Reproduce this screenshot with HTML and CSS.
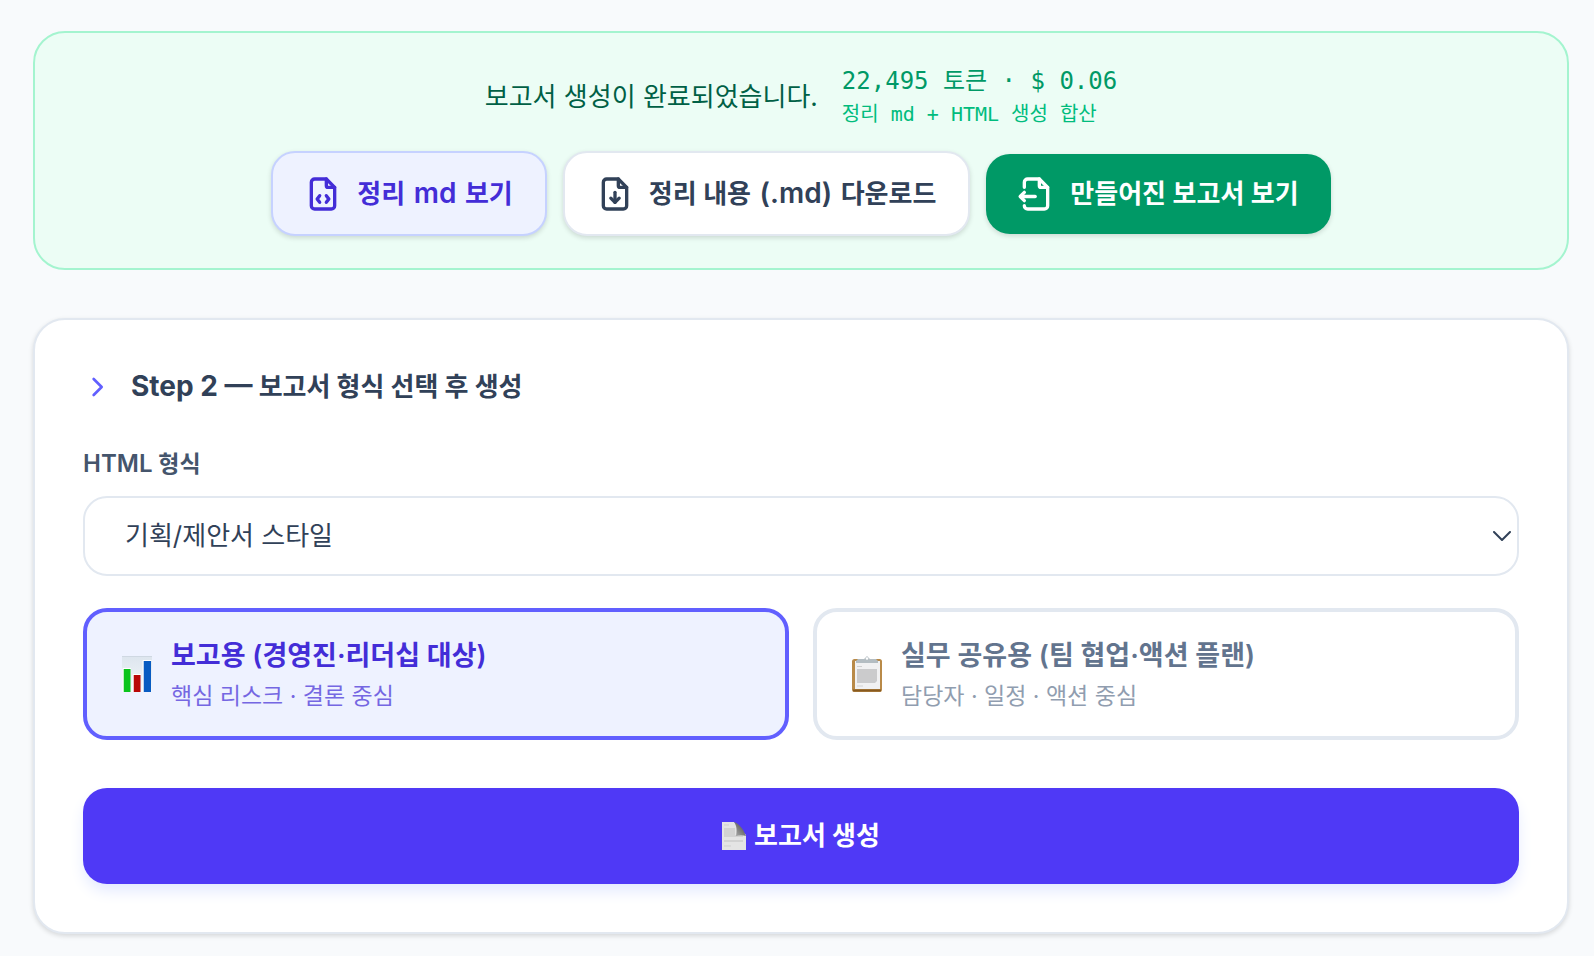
FILE: index.html
```html
<!DOCTYPE html>
<html lang="ko">
<head>
<meta charset="utf-8">
<meta name="viewport" content="width=device-width, initial-scale=1">
<title>보고서 생성</title>
<link rel="stylesheet" href="styles.css">
</head>
<body>
<main class="page">
  <section class="done">
    <div class="done-head">
      <p class="done-message">보고서 생성이 완료되었습니다.</p>
      <div class="usage">
        <span class="usage-total">22,495 토큰 · $ 0.06</span>
        <span class="usage-note">정리 md + HTML 생성 합산</span>
      </div>
    </div>
    <div class="actions">
      <button type="button" class="btn btn-view">
        <svg class="icon" viewBox="0 0 24 24" aria-hidden="true"><path d="M14 3v4a1 1 0 0 0 1 1h4"/><path d="M17 21H7a2 2 0 0 1-2-2V5a2 2 0 0 1 2-2h7l5 5v11a2 2 0 0 1-2 2z"/><path d="M10 13l-1.500 2 1.500 2"/><path d="M14 13l1.500 2-1.500 2"/></svg>
        <span>정리 <span class="latin">md</span> 보기</span>
      </button>
      <button type="button" class="btn btn-download">
        <svg class="icon" viewBox="0 0 24 24" aria-hidden="true"><path d="M14 3v4a1 1 0 0 0 1 1h4"/><path d="M17 21H7a2 2 0 0 1-2-2V5a2 2 0 0 1 2-2h7l5 5v11a2 2 0 0 1-2 2z"/><path d="M12 11v6"/><path d="M9.500 14.500L12 17l2.500-2.500"/></svg>
        <span>정리 내용 <span class="latin">(.md)</span> 다운로드</span>
      </button>
      <button type="button" class="btn btn-report">
        <svg class="icon" viewBox="0 0 24 24" aria-hidden="true"><path d="M14 3v4a1 1 0 0 0 1 1h4"/><path d="M5 8V5a2 2 0 0 1 2-2h7l5 5v11a2 2 0 0 1-2 2H7a2 2 0 0 1-2-2"/><path d="M11.500 13.500H3"/><path d="M5 11l-2.500 2.500L5 16"/></svg>
        <span>만들어진 보고서 보기</span>
      </button>
    </div>
  </section>

  <section class="card">
    <button type="button" class="step">
      <svg class="step-icon" viewBox="0 0 24 24" aria-hidden="true"><path d="M8 6l6 6-6 6"/></svg>
      <span><span class="latin">Step 2 —</span> 보고서 형식 선택 후 생성</span>
    </button>

    <div class="field">
      <label class="label" for="format"><span class="label-latin">HTML</span> 형식</label>
      <div class="select-wrap">
        <select id="format" class="select">
          <option>기획/제안서 스타일</option>
        </select>
        <svg class="select-arrow" viewBox="0 0 18 10" aria-hidden="true"><path d="M1 1l8 8 8-8"/></svg>
      </div>
    </div>

    <div class="choices">
      <button type="button" class="choice choice-active" aria-pressed="true">
        <svg class="emoji" viewBox="-2 0 36 38" aria-hidden="true">
          <defs><linearGradient id="sheet" x1="0" y1="0" x2="0" y2="1"><stop offset="0" stop-color="#dde5ee"/><stop offset="1" stop-color="#f4f7fb"/></linearGradient></defs>
          <rect x="1" y="1" width="30" height="36" fill="url(#sheet)"/>
          <path d="M1 1.500h30" stroke="#cfd8e2"/>
          <path d="M2.500 14h7v23h-7z" fill="#0bc41c"/><path d="M12.500 20h7v17h-7z" fill="#b90707"/><path d="M22.500 6h7.500v31h-7.500z" fill="#085bc2"/>
          <path d="M2 37V13.500h8M12 37V19.500h8M22 37V5.500h8.500" fill="none" stroke="#fff"/>
        </svg>
        <span class="choice-text">
          <span class="choice-title">보고용 (경영진·리더십 대상)</span>
          <span class="choice-note">핵심 리스크 · 결론 중심</span>
        </span>
      </button>
      <button type="button" class="choice" aria-pressed="false">
        <svg class="emoji" viewBox="-2 0 36 38" aria-hidden="true">
          <rect x="1" y="4" width="30" height="33" rx="2.500" fill="#b98a48"/>
          <path d="M2 35.500h28" stroke="#875a20" stroke-width="2"/>
          <rect x="4" y="6" width="25" height="28" fill="#f1f1f2"/>
          <path d="M6 11.500h5" stroke="#cfcfcf"/>
          <path d="M6 14h20v12l-2 2H6z" fill="#cbcbcc"/>
          <path d="M6 31h6" stroke="#d2d2d2"/>
          <path d="M5 8V6l2-2h6l3-3 3 3h6l2 2v2z" fill="#b4bdc2"/>
          <circle cx="16" cy="3.500" r="1.200" fill="#fff"/>
        </svg>
        <span class="choice-text">
          <span class="choice-title">실무 공유용 (팀 협업·액션 플랜)</span>
          <span class="choice-note">담당자 · 일정 · 액션 중심</span>
        </span>
      </button>
    </div>

    <button type="button" class="submit">
      <svg class="submit-icon" viewBox="0 0 24 28" aria-hidden="true">
        <defs><linearGradient id="fold" x1="1" y1="0" x2="0" y2="1"><stop offset="0" stop-color="#3f3f3f"/><stop offset="1" stop-color="#b0b0b0"/></linearGradient></defs>
        <path d="M0 0h12l12 13v15H0z" fill="#e4e4e4"/>
        <path d="M2 3h5M2 24h7" stroke="#cfcfcf"/>
        <path d="M2 6h11v7h8v2H2zM2 18h19v2H2z" fill="#d2d2d2"/>
        <path d="M12 0c4 1 9 6 12 14-3-1-7-1-10 0 1-5 1-10-2-14z" fill="url(#fold)"/>
      </svg>
      <span>보고서 생성</span>
    </button>
  </section>
</main>
</body>
</html>
```
FILE: styles.css
```css
* {
  box-sizing: border-box;
}

body {
  margin: 0;
  background: #f8fafc;
  color: #314158;
  font-family: Inter, "Noto Sans CJK KR", sans-serif;
  font-size: 26px;
  line-height: 40px;
}

button,
select {
  font: inherit;
  color: inherit;
}

button {
  cursor: pointer;
}

p {
  margin: 0;
}

.page {
  display: flex;
  flex-direction: column;
  gap: 48px;
  padding: 31px 25px 20px 33px;
}

.latin {
  font-size: 28px;
}

.btn .latin {
  margin: 0 2px;
}

.done {
  display: flex;
  flex-direction: column;
  gap: 22px;
  padding: 32px;
  border: 2px solid #a4f4cf;
  border-radius: 32px;
  background: #ecfdf5;
}

.done-head {
  display: flex;
  align-items: center;
  justify-content: center;
  gap: 24px;
}

.done-message {
  color: #006045;
}

.usage {
  display: flex;
  flex-direction: column;
  gap: 2px;
  color: #009966;
  font-family: "DejaVu Sans Mono", "Noto Sans CJK KR", monospace;
  font-size: 24px;
  line-height: 32px;
}

.usage-note {
  color: #00bc7d;
  font-size: 20px;
  line-height: 30px;
}

.actions {
  display: flex;
  flex-wrap: wrap;
  align-items: center;
  justify-content: center;
  gap: 16px;
}

.btn {
  display: flex;
  align-items: center;
  gap: 14px;
  padding: 20px 32px 20px 30px;
  border: 2px solid;
  border-radius: 24px;
  font-weight: 600;
  box-shadow: 0 2px 5px rgba(0, 0, 0, 0.14);
}

.btn-view {
  border-color: #c6d2ff;
  background: #eef2ff;
  color: #432dd7;
}

.btn-download {
  border-color: #e2e8f0;
  background: #fff;
}

.btn-report {
  border: 0;
  background: #009966;
  color: #fff;
}

.icon,
.step-icon,
.select-arrow {
  flex: none;
  fill: none;
  stroke: currentColor;
  stroke-width: 2;
  stroke-linecap: round;
  stroke-linejoin: round;
}

.icon {
  width: 40px;
  height: 40px;
}

.card {
  display: flex;
  flex-direction: column;
  padding: 48px;
  border: 2px solid #e2e8f0;
  border-radius: 32px;
  background: #fff;
  box-shadow: 0 2px 5px rgba(0, 0, 0, 0.14);
}

.step {
  display: flex;
  align-items: center;
  align-self: flex-start;
  gap: 16px;
  padding: 0;
  border: 0;
  background: none;
  font-weight: 700;
  line-height: 36px;
}

.step-icon {
  width: 32px;
  height: 32px;
  color: #615fff;
}

.field {
  display: flex;
  flex-direction: column;
  gap: 16px;
  margin-top: 43px;
}

.label {
  color: #45556c;
  font-size: 23px;
  font-weight: 600;
  line-height: 32px;
}

.label-latin {
  font-size: 24px;
}

.select-wrap {
  position: relative;
}

.select {
  display: block;
  width: 100%;
  height: 80px;
  padding: 0 40px;
  border: 2px solid #e2e8f0;
  border-radius: 24px;
  background: #fff;
  appearance: none;
}

.select-arrow {
  position: absolute;
  top: 35px;
  right: 8px;
  width: 18px;
  height: 10px;
  pointer-events: none;
}

.choices {
  display: grid;
  grid-template-columns: 1fr 1fr;
  gap: 24px;
  margin-top: 32px;
}

.choice {
  display: flex;
  align-items: center;
  gap: 16px;
  padding: 24px 32px;
  border: 4px solid #e2e8f0;
  border-radius: 24px;
  background: #fff;
  color: #62748e;
  text-align: left;
}

.choice-active {
  border-color: #615fff;
  background: #eef2ff;
  color: #432dd7;
}

.emoji {
  flex: none;
  width: 36px;
  height: 38px;
}

.choice-text {
  display: flex;
  flex-direction: column;
  gap: 4px;
}

.choice-title {
  font-size: 27px;
  font-weight: 600;
}

.choice-note {
  font-size: 23px;
  line-height: 32px;
  opacity: 0.7;
}

.submit {
  display: flex;
  align-items: center;
  justify-content: center;
  gap: 8px;
  margin-top: 48px;
  padding: 28px;
  border: 0;
  border-radius: 24px;
  background: #4f39f6;
  color: #fff;
  font-weight: 700;
  box-shadow: 0 8px 16px -2px #e0e7ff;
}

.submit-icon {
  width: 24px;
  height: 28px;
}
```
